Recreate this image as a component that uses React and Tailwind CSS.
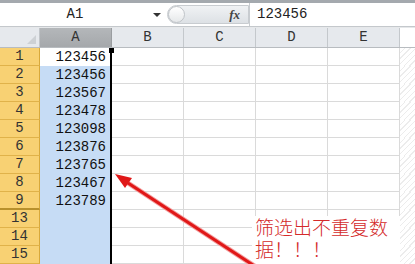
import React from 'react';

const rows = [
  { n: '1', v: '123456', active: true },
  { n: '2', v: '123456' },
  { n: '3', v: '123567' },
  { n: '4', v: '123478' },
  { n: '5', v: '123098' },
  { n: '6', v: '123876' },
  { n: '7', v: '123765' },
  { n: '8', v: '123467' },
  { n: '9', v: '123789', gap: true },
  { n: '13', v: '' },
  { n: '14', v: '' },
  { n: '15', v: '' },
];

const cols = ['B', 'C', 'D', 'E'];
const mono = { fontFamily: '"Liberation Mono", "DejaVu Sans Mono", monospace' };

export default function App() {
  return (
    <div className="relative w-[415px] h-[264px] overflow-hidden bg-white" style={mono}>
      <div className="h-[3px] bg-[#a4a9ae]" />

      {/* formula bar */}
      <div className="h-[23px] flex items-center bg-white">
        <div className="w-[150px] text-center text-[14px] text-[#222]">A1</div>
        <div className="w-[14px] flex justify-center">
          <span className="w-0 h-0 border-l-[4px] border-r-[4px] border-t-[4px] border-l-transparent border-r-transparent border-t-[#333]" />
        </div>
        <div className="ml-[3px] w-[82px] h-[19px] flex items-center rounded-l-full bg-gradient-to-b from-[#f0f2f4] to-[#dde1e5] border border-[#c8ccd0]">
          <div className="w-[17px] h-[17px] rounded-full border border-[#c0c4c8] bg-gradient-to-b from-white to-[#e6e8ea]" />
          <div className="flex-1" />
          <span className="mr-[8px] text-[13px] italic font-bold text-[#444]" style={{ fontFamily: '"Liberation Serif", serif' }}>fx</span>
        </div>
        <div className="flex-1 h-full border-l border-[#c8ccd0] pl-[7px] flex items-center text-[14px] text-[#222]">123456</div>
        <div className="w-[15px]" />
      </div>
      <div className="h-[2px] bg-[#c4c8cc] border-b border-[#e6e8ea]" />

      {/* column headers */}
      <div className="h-[20px] flex bg-[#e6e9ed] border-b border-[#b8bcc0] text-[14px] text-[#333]">
        <div className="w-[40px] border-r border-[#c0c4c8] relative">
          <svg className="absolute right-[3px] bottom-[3px]" width="9" height="9" viewBox="0 0 9 9">
            <polygon points="9,0 9,9 0,9" fill="#cdd1d5" />
          </svg>
        </div>
        <div className="w-[72px] bg-gradient-to-b from-[#b4b7ba] to-[#a5a8ab] border-r border-[#9a9da0] flex items-center justify-center">A</div>
        {cols.map((c) => (
          <div key={c} className="w-[72px] border-r border-[#c4c8cc] flex items-center justify-center">{c}</div>
        ))}
        <div className="flex-1 bg-white" />
      </div>

      {/* rows */}
      {rows.map((r) => (
        <div key={r.n} className="h-[18px] flex">
          <div className={`w-[40px] bg-[#f8d173] text-center text-[14px] leading-[17px] text-[#333] border-r border-[#d9a93a] ${r.gap ? 'border-b-2 border-b-[#b8902c]' : 'border-b border-b-[#e0b24a]'}`}>{r.n}</div>
          <div className={`w-[72px] relative flex items-center justify-end pr-[4px] text-[14px] text-[#111] border-r-[2px] border-black ${r.active ? 'bg-white' : 'bg-[#c6dcf5]'}`}>
            {r.v}
            {r.active && <span className="absolute right-[-4px] top-0 w-[5px] h-[5px] bg-black" />}
          </div>
          {cols.map((c) => (
            <div key={c} className="w-[72px] border-r border-b border-[#dadada]" />
          ))}
          <div className="flex-1 bg-[repeating-linear-gradient(135deg,#ffffff_0px,#ffffff_3px,#ececec_3px,#ececec_4px)]" />
        </div>
      ))}

      {/* annotation */}
      <div className="absolute left-[252px] top-[216px] w-[148px] h-[48px] bg-white pl-[3px] text-[19px] leading-[22px] text-[#d42a2a]" style={{ fontFamily: '"Noto Sans CJK SC", sans-serif', fontWeight: 300 }}>
        筛选出不重复数据！！！
      </div>
      <svg className="absolute left-0 top-0" width="415" height="264" viewBox="0 0 415 264">
        <line x1="128" y1="183" x2="256" y2="267" stroke="#f4a0a0" strokeWidth="5" />
        <line x1="128" y1="183" x2="256" y2="267" stroke="#e01818" strokeWidth="3" />
        <polygon points="115,174 125,188 132,178" fill="#e01818" />
      </svg>
    </div>
  );
}
